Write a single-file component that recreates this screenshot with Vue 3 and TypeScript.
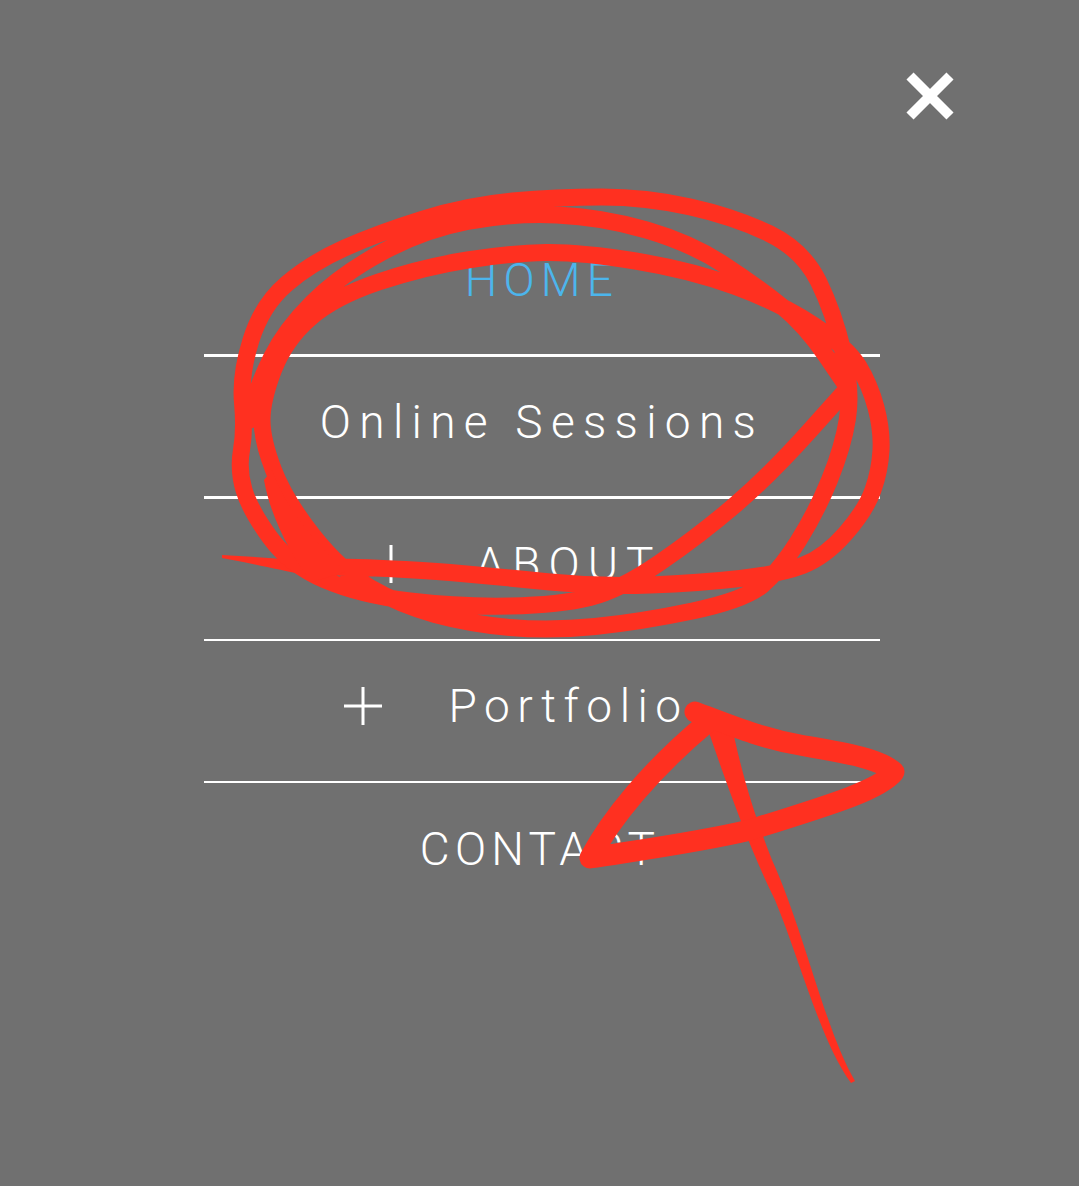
<script setup lang="ts">
interface Item { label: string; tone: string; active?: boolean; expandable?: boolean; thick?: boolean }
const items: Item[] = [
  { label: 'HOME', tone: 'base', active: true, thick: true },
  { label: 'Online Sessions', tone: 'wide', thick: true },
  { label: 'ABOUT', tone: 'wider', expandable: true },
  { label: 'Portfolio', tone: 'mid', expandable: true },
  { label: 'CONTACT', tone: 'tight' },
]

type Pt = [number, number]
function smooth(points: Pt[]): string {
  let d = `M${points[0][0]} ${points[0][1]}`
  for (let i = 1; i < points.length - 1; i++) {
    const [x, y] = points[i]
    const [nx, ny] = points[i + 1]
    d += ` Q${x} ${y} ${(x + nx) / 2} ${(y + ny) / 2}`
  }
  const last = points[points.length - 1]
  return `${d} L${last[0]} ${last[1]}`
}

const ring = smooth([
  [300, 566], [400, 568], [500, 577], [600, 587], [700, 583], [780, 574], [825, 557], [866, 510],
  [880, 470], [882, 430], [870, 385], [847, 347], [780, 303], [691, 270], [580, 252], [512, 253],
  [423, 267], [334, 297], [285, 340], [262, 400], [262, 440], [285, 500], [340, 570], [400, 605],
  [470, 624], [550, 631], [640, 622], [745, 600], [780, 570], [816, 513], [843, 447], [852, 390],
  [834, 313], [803, 250], [735, 217], [646, 197], [557, 197], [468, 205], [378, 233], [311, 263],
  [262, 305], [240, 375], [245, 430], [238, 470], [250, 510], [290, 565], [360, 595], [460, 607],
  [560, 605], [620, 590], [700, 535], [770, 475], [848, 388], [848, 388], [805, 325], [758, 287],
  [691, 243], [602, 217], [512, 213], [423, 230], [340, 275], [285, 330], [258, 385], [250, 420],
])
const arrow = 'M695 712 C730 725 760 738 800 745 C840 752 880 758 894 772 C880 790 830 805 750 830 C700 842 640 850 590 858 C610 820 650 770 708 722'
</script>

<template>
  <main class="page">
    <header class="top">
      <button class="close" aria-label="Close">
        <svg viewBox="0 0 48 48" width="48" height="48">
          <path d="M4 4 L44 44 M44 4 L4 44" fill="none" stroke="#fff" stroke-width="10" />
        </svg>
      </button>
    </header>
    <nav class="menu">
      <a
        v-for="item in items"
        :key="item.label"
        class="row"
        :class="[item.tone, { active: item.active, expandable: item.expandable, thick: item.thick }]"
      >
        <svg v-if="item.expandable" class="plus" viewBox="0 0 38 38" width="38" height="38">
          <path d="M0 19 H38 M19 0 V38" fill="none" stroke="#fff" stroke-width="3" />
        </svg>
        <span>{{ item.label }}</span>
      </a>
    </nav>
    <svg class="scribble" viewBox="0 0 1079 1186" width="1079" height="1186" aria-hidden="true">
      <path d="M222 555 C250 556 280 560 305 559 L305 575 C280 570 245 562 222 558 Z" fill="#ff3020" />
      <path :d="ring" fill="none" stroke="#ff3020" stroke-width="17" stroke-linecap="round" stroke-linejoin="round" />
      <path d="M272 470 C288 515 320 545 345 572 L312 582 C290 555 270 515 264 480 Z" fill="#ff3020" />
      <path d="M704 718 L730 716 C740 770 756 820 772 860 C804 930 825 1030 855 1081 L851 1083 C820 1040 800 960 775 900 C750 850 725 780 704 718 Z" fill="#ff3020" />
      <path :d="arrow" fill="none" stroke="#ff3020" stroke-width="21" stroke-linecap="round" stroke-linejoin="round" />
    </svg>
  </main>
</template>

<style scoped>
.page {
  position: relative;
  width: 1079px;
  height: 1186px;
  overflow: hidden;
  background: #707070;
  font-family: Roboto, "Liberation Sans", sans-serif;
}
.top {
  display: flex;
  justify-content: flex-end;
  height: 215px;
  padding: 72px 125px 0 0;
  box-sizing: border-box;
}
.close {
  width: 48px;
  height: 48px;
  padding: 0;
  border: 0;
  background: none;
}
.close svg { display: block; }
.menu {
  display: flex;
  flex-direction: column;
  width: 676px;
  margin-left: 204px;
}
.row {
  display: flex;
  align-items: center;
  justify-content: center;
  gap: 66px;
  height: 142px;
  padding-bottom: 10px;
  box-sizing: border-box;
  color: #fff;
  font-size: 46px;
  font-weight: 300;
  line-height: 1;
  white-space: nowrap;
  border-bottom: 2.5px solid #fff;
}
.base { letter-spacing: 6.2px; }
.wide { letter-spacing: 8.3px; }
.wider { letter-spacing: 8px; }
.mid { letter-spacing: 7.5px; }
.tight { letter-spacing: 5.2px; padding-right: 4px; }
.row.thick { border-bottom-width: 3.5px; }
.row:last-child { border-bottom: 0; }
.row.active { color: #4cb5ec; }
.row.expandable { padding-right: 51px; }
.plus { flex: none; }
.scribble {
  position: absolute;
  inset: 0;
  pointer-events: none;
}
</style>
